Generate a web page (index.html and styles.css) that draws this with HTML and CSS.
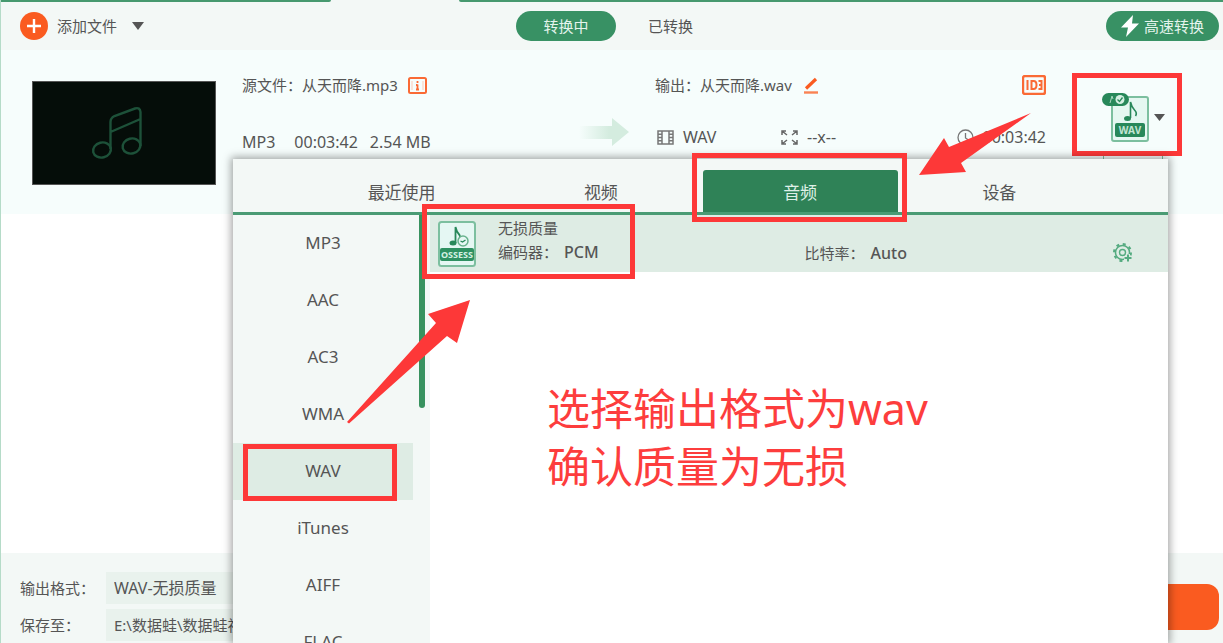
FILE: index.html
```html
<!DOCTYPE html>
<html lang="zh-CN">
<head>
<meta charset="utf-8">
<title>音频转换</title>
<link rel="stylesheet" href="styles.css">
</head>
<body>
<div class="app">
  <div class="strip"><span class="strip-left"></span><span class="strip-right"></span></div>

  <header class="toolbar">
    <button class="add" type="button">
      <svg width="28" height="28" viewBox="0 0 28 28" aria-hidden="true"><circle cx="14" cy="14" r="14" fill="#fa5b20"/><path d="M14 7v14M7 14h14" stroke="#fff" stroke-width="2.400"/></svg>
      <span>添加文件</span>
      <svg class="add-caret" width="12" height="8" viewBox="0 0 12 8" aria-hidden="true"><path d="M0 0h12L6 8z" fill="#555"/></svg>
    </button>
    <nav class="modes">
      <button class="pill" type="button">转换中</button>
      <button class="mode" type="button">已转换</button>
    </nav>
    <button class="pill fast" type="button">
      <svg width="18" height="22" viewBox="0 0 18 22" aria-hidden="true"><path d="M12 0L0 12.500h7L5 22 18 8.500h-7z" fill="#fff"/></svg>
      <span>高速转换</span>
    </button>
  </header>

  <section class="file">
    <div class="thumb">
      <svg width="52" height="54" viewBox="0 0 52 54" fill="none" stroke="#1d5139" stroke-width="2.400" aria-hidden="true"><ellipse cx="11" cy="44" rx="9" ry="7.500" transform="rotate(-14 11 44)"/><ellipse cx="40.500" cy="40" rx="9" ry="7.500" transform="rotate(-14 40.500 40)"/><path d="M19.500 43V16q0-4 4-6L44 2.500q5-1.500 5.500 3.500v34M19.500 26L49.500 13"/></svg>
    </div>
    <div class="source">
      <div class="line">源文件：从天而降.mp3
        <svg class="info-icon" width="19" height="17" viewBox="0 0 19 17" aria-hidden="true"><rect x="1" y="1" width="17" height="15" rx="1.500" fill="none" stroke="#fa6a35" stroke-width="2"/><path d="M4 4v9M15 4v9" stroke="#fbd5c4" stroke-width="1.200"/><path d="M9.500 4v2M9.500 7.500V13M8 12.500h3M8 8h1.500" stroke="#fa6a35" stroke-width="1.800"/></svg>
      </div>
      <div class="line facts"><span class="codec-name">MP3</span><span>00:03:42</span><span>2.54 MB</span></div>
    </div>
    <svg class="flow" width="50" height="30" viewBox="0 0 50 30" aria-hidden="true"><defs><linearGradient id="fade"><stop offset="0" stop-color="#d4ecdf" stop-opacity="0"/><stop offset=".6" stop-color="#d4ecdf"/></linearGradient></defs><path d="M0 9h33V1l17 14-17 14v-7H0z" fill="url(#fade)"/></svg>
    <div class="target">
      <div class="line">输出：从天而降.wav
        <svg class="edit-icon" width="15" height="17" viewBox="0 0 15 17" aria-hidden="true"><path d="M0 15.500h14" stroke="#fa8253" stroke-width="2.400"/><path d="M2 11.500L12 2" stroke="#fa5b20" stroke-width="3.200"/></svg>
        <svg class="id-icon" width="24" height="20" viewBox="0 0 24 20" aria-hidden="true"><rect x="1" y="1" width="22" height="18" rx="2" fill="none" stroke="#fa6a35" stroke-width="2.400"/><path d="M5.500 5v10M9.500 6v8h2q3 0 3-4t-3-4zM16.500 6h3v8h-3M17 10h2.500" fill="none" stroke="#fa6a35" stroke-width="2"/></svg>
      </div>
      <div class="line specs">
        <span><svg width="17" height="15" viewBox="0 0 17 15" fill="none" stroke="#777" stroke-width="1.500" aria-hidden="true"><rect x="1" y="1" width="15" height="13"/><path d="M5 1v13M12 1v13M1 4.300h4M1 7.500h4M1 10.700h4M12 4.300h4M12 7.500h4M12 10.700h4"/></svg>WAV</span>
        <span><svg width="17" height="15" viewBox="0 0 17 15" fill="none" stroke="#666" stroke-width="1.500" aria-hidden="true"><path d="M1 5V1h4M1 1l5 4M12 1h4v4M16 1l-5 4M1 10v4h4M1 14l5-4M12 14h4v-4M16 14l-5-4"/></svg>--x--</span>
        <span><svg width="17" height="17" viewBox="0 0 17 17" fill="none" stroke="#777" stroke-width="1.300" aria-hidden="true"><circle cx="8.500" cy="8.500" r="7.500"/><path d="M8.500 4v5l3 2"/></svg>00:03:42</span>
      </div>
    </div>
    <div class="format">
      <button class="settings" type="button">设置</button>
      <button class="format-button" type="button" aria-label="输出格式 WAV">
        <svg width="47" height="49" viewBox="0 0 47 49" aria-hidden="true"><rect x="10" y="4" width="36" height="44" rx="2" fill="#e5f7f1" stroke="#7cbf9f" stroke-width="2"/><rect x="13" y="30" width="30" height="14" rx="2" fill="#28885a"/><text x="28" y="41" text-anchor="middle" font-size="10" font-weight="bold" fill="#c2e5d3">WAV</text><ellipse cx="25.500" cy="25.500" rx="3.500" ry="2.500" fill="#28885a"/><path d="M28.500 25V9q1 5 4 8t1 6" fill="none" stroke="#28885a" stroke-width="1.600"/><rect x="0" y="0" width="27" height="13" rx="6.500" fill="#28885a"/><path d="M8 10l2-7 1 3" fill="none" stroke="#a9d8c0"/><circle cx="18" cy="6.500" r="4.500" fill="#d4efe2"/><path d="M15.500 6.500l2 2 3-4" fill="none" stroke="#28885a" stroke-width="1.300"/></svg>
        <svg width="11" height="7" viewBox="0 0 11 7" aria-hidden="true"><path d="M0 0h11L5.500 7z" fill="#555"/></svg>
      </button>
    </div>
  </section>

  <main class="list"></main>

  <footer class="footer">
    <div class="fields">
      <label for="out">输出格式：</label>
      <select id="out" class="out"><option>WAV-无损质量</option></select>
      <label for="path">保存至：</label>
      <select id="path"><option>E:\数据蛙\数据蛙视频</option></select>
    </div>
    <button class="convert" type="button" aria-label="全部转换"></button>
  </footer>

  <div class="popup">
    <div class="tabs">
      <button type="button">最近使用</button>
      <button type="button">视频</button>
      <button class="active" type="button">音频<i class="mark mark-tab"></i></button>
      <button type="button">设备</button>
    </div>
    <div class="panes">
      <div class="side">
        <div class="formats">
          <button type="button">MP3</button>
          <button type="button">AAC</button>
          <button type="button">AC3</button>
          <button type="button">WMA</button>
          <button class="active" type="button">WAV<i class="mark mark-item"></i></button>
          <button type="button">iTunes</button>
          <button type="button">AIFF</button>
          <button type="button">FLAC</button>
        </div>
        <div class="scroll"></div>
      </div>
      <div class="content">
        <div class="preset">
          <svg width="38" height="46" viewBox="0 0 38 46" aria-hidden="true"><rect x="1" y="1" width="36" height="44" rx="2.500" fill="#e5f7f3" stroke="#7cbf9f" stroke-width="2"/><rect x="2" y="27" width="34" height="13" rx="2" fill="#2f9162"/><text x="19" y="37" text-anchor="middle" font-size="9" font-weight="bold" fill="#d6f0e3">OSSESS</text><ellipse cx="15" cy="22" rx="3.500" ry="2.500" fill="#28885a"/><path d="M17.500 22V6q1 5 4 8l1 3" fill="none" stroke="#28885a" stroke-width="1.800"/><circle cx="25" cy="20" r="5" fill="#e5f7f3" stroke="#68b28d" stroke-width="1.500"/><path d="M22.500 20l2 1 3-2" fill="none" stroke="#28885a" stroke-width="1.300"/></svg>
          <div class="codec"><div>无损质量</div><div>编码器：<b>PCM</b></div></div>
          <div class="rate">比特率：<b>Auto</b></div>
          <button class="gear" type="button" aria-label="设置">
            <svg width="20" height="20" viewBox="0 0 20 20" fill="none" stroke="#55ab80" aria-hidden="true"><circle cx="9.500" cy="9.500" r="7" stroke-width="1.500"/><circle cx="9.500" cy="9.500" r="8.500" stroke-width="2" stroke-dasharray="3 3.676"/><circle cx="9.500" cy="9.500" r="3" stroke-width="1.400"/><path d="M15 11v8M11 15h8" stroke="#deece4" stroke-width="4"/><path d="M15 11.500v7M11.500 15h7" stroke-width="2"/></svg>
          </button>
          <i class="mark mark-preset"></i>
        </div>
        <p class="note">选择输出格式为wav<br>确认质量为无损</p>
      </div>
    </div>
    <svg class="arrow arrow-preset" width="123" height="124" viewBox="0 0 123 124" aria-hidden="true"><path d="M123 0L81 14l8 9L0 122l2 1.500L100 36l10 7z" fill="#fd3838"/></svg>
    <svg class="arrow arrow-tab" width="112" height="63" viewBox="0 0 112 63" aria-hidden="true"><path d="M0 62l25-37 5 9L112 0 42 50l5 9z" fill="#fd3838"/></svg>
  </div>
</div>
</body>
</html>
```
FILE: styles.css
```css
* { box-sizing: border-box; }

body {
  margin: 0;
  color: #555;
  font-family: "Noto Sans", "Noto Sans CJK SC", sans-serif;
  font-size: 15px;
  line-height: 24px;
}

button,
select {
  margin: 0;
  padding: 0;
  border: 0;
  background: none;
  color: inherit;
  font: inherit;
}

svg { display: block; flex: none; }

b { font-weight: 500; }

.app {
  position: relative;
  display: flex;
  flex-direction: column;
  height: 100vh;
  overflow: hidden;
  border-left: 1px solid #b5dbc8;
  background: #fff;
}

.strip {
  display: flex;
  justify-content: space-between;
  gap: 128px;
  height: 3px;
  background: #f3f8f6;
}

.strip-left,
.strip-right {
  height: 2px;
  background: #46996f;
}

.strip-left { flex: 0 0 330px; border-bottom-right-radius: 6px; }
.strip-right { flex: 1; border-bottom-left-radius: 6px; }

.toolbar {
  position: relative;
  display: flex;
  align-items: center;
  justify-content: space-between;
  height: 47px;
  padding: 0 4px 2px 19px;
  background: #f3f8f6;
}

.add { display: flex; align-items: center; gap: 9px; }
.add-caret { margin-left: 6px; }

.modes {
  position: absolute;
  left: 515px;
  display: flex;
  align-items: center;
  gap: 32px;
}

.pill {
  width: 100px;
  height: 30px;
  border-radius: 15px;
  background: #389164;
  color: #e4f4ec;
}

.fast {
  display: flex;
  align-items: center;
  justify-content: center;
  gap: 5px;
  width: 113px;
}

.file {
  display: grid;
  grid-template-columns: 184px 1fr 50px 391px 110px;
  column-gap: 26px;
  align-items: start;
  height: 164px;
  padding: 23px 41px 0 31px;
  background: #f6fdfc;
}

.thumb {
  display: grid;
  place-items: center;
  height: 104px;
  margin-top: 8px;
  padding-right: 14px;
  border: 1px solid #555;
  background: #050d09;
}

.line { display: flex; align-items: center; white-space: nowrap; }
.info-icon { margin-left: 10px; }
.edit-icon { margin-left: 12px; }
.id-icon { margin-left: auto; }

.source { display: grid; gap: 33px; }
.facts { gap: 12px; font-size: 16px; }
.codec-name { padding-right: 7px; }

.flow { margin-top: 44px; }

.target { display: grid; gap: 28px; }
.specs {
  display: grid;
  grid-template-columns: 124px 1fr auto;
  padding-left: 2px;
  font-size: 16px;
}
.specs span { display: flex; align-items: center; gap: 9px; }

.format { position: relative; }

.format-button {
  position: relative;
  display: flex;
  align-items: center;
  justify-content: flex-end;
  gap: 5px;
  width: 100%;
  height: 83px;
  padding: 5px 12px 0 0;
  border: 5px solid #fd3838;
  background: #f6fdfc;
}

.settings {
  position: absolute;
  top: 79px;
  left: 31px;
  width: 60px;
  height: 24px;
  border: 1px solid #7cbf9f;
  border-radius: 3px;
  color: #28885a;
  font-size: 13px;
}

.list { flex: 1; }

.footer {
  display: flex;
  justify-content: space-between;
  align-items: flex-start;
  height: 90px;
  padding: 19px 4px 0 19px;
  background: #f3f8f6;
}

.fields {
  display: grid;
  grid-template-columns: 86px 300px;
  row-gap: 5px;
  align-items: center;
}

.fields select {
  height: 32px;
  padding: 0 8px;
  appearance: none;
  background: #e9f2ed;
}

.fields .out { font-size: 16px; }

.convert {
  width: 180px;
  height: 46px;
  margin-top: 12px;
  border-radius: 12px;
  background: #fa5b20;
}

.popup {
  position: absolute;
  top: 159px;
  right: 55px;
  bottom: 0;
  left: 232px;
  display: flex;
  flex-direction: column;
  background: #fff;
  box-shadow: 0 0 8px 2px rgba(0, 0, 0, 0.35);
}

.tabs {
  display: grid;
  grid-template-columns: repeat(4, 1fr);
  height: 56px;
  padding: 11px 69px 0;
  border-bottom: 3px solid #4a9b74;
  background: #f3f8f6;
}

.tabs button {
  position: relative;
  margin: 0 2px;
  padding-top: 4px;
  border-radius: 3px 3px 0 0;
  font-size: 17px;
}

.tabs .active { background: #2f8257; color: #dff0e7; }

.panes { display: flex; flex: 1; min-height: 0; }

.side {
  display: flex;
  gap: 6px;
  width: 197px;
  overflow: hidden;
  background: #f3f8f6;
}

.formats { width: 180px; }

.formats button {
  position: relative;
  display: block;
  width: 100%;
  height: 57px;
  padding-bottom: 2px;
  font-size: 17px;
}

.formats .active { background: #deece4; }

.scroll {
  width: 6px;
  height: 193px;
  border-radius: 0 0 3px 3px;
  background: #38925f;
}

.content { flex: 1; }

.preset {
  position: relative;
  display: grid;
  grid-template-columns: 38px 1fr 1fr 20px;
  align-items: center;
  height: 57px;
  padding: 0 35px 0 8px;
  background: #deece4;
}

.codec { padding: 0 0 7px 22px; }
.rate { padding: 18px 0 0 10px; }
.codec b, .rate b { margin-left: 6px; font-size: 16px; }
.gear { margin-top: 19px; }

.note {
  margin: 108px 0 0 117px;
  color: #fd3d3d;
  font-size: 43px;
  line-height: 58px;
}

.mark {
  position: absolute;
  border: 5px solid #fd3838;
  pointer-events: none;
}

.mark-tab { inset: -17px -9px -10px -11px; z-index: 1; }
.mark-item { inset: 1px 16px -1px 10px; }
.mark-preset { top: -11px; left: -8px; width: 213px; height: 75px; }

.arrow { position: absolute; }
.arrow-preset { top: 141px; left: 114px; }
.arrow-tab { top: -46px; right: 137px; }
```
